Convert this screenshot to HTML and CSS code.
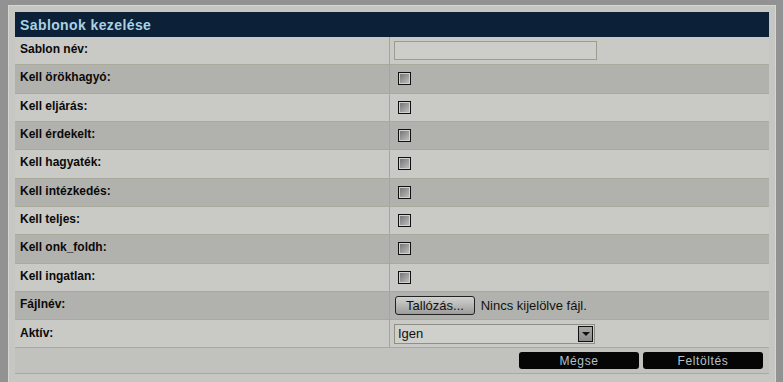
FILE: index.html
```html
<!DOCTYPE html>
<html lang="hu">
<head>
    <meta charset="UTF-8">
    <title>Sablonok kezelése</title>
    <link rel="stylesheet" href="styles.css">
</head>
<body>
    <div class="panel">
        <div class="panel-title">Sablonok kezelése</div>
        <table class="form-table">
            <tr class="light">
                <td class="label">Sablon név:</td>
                <td><input type="text" class="text-input"></td>
            </tr>
            <tr class="dark">
                <td class="label">Kell örökhagyó:</td>
                <td><span class="check"></span></td>
            </tr>
            <tr class="light">
                <td class="label">Kell eljárás:</td>
                <td><span class="check"></span></td>
            </tr>
            <tr class="dark">
                <td class="label">Kell érdekelt:</td>
                <td><span class="check"></span></td>
            </tr>
            <tr class="light">
                <td class="label">Kell hagyaték:</td>
                <td><span class="check"></span></td>
            </tr>
            <tr class="dark">
                <td class="label">Kell intézkedés:</td>
                <td><span class="check"></span></td>
            </tr>
            <tr class="light">
                <td class="label">Kell teljes:</td>
                <td><span class="check"></span></td>
            </tr>
            <tr class="dark">
                <td class="label">Kell onk_foldh:</td>
                <td><span class="check"></span></td>
            </tr>
            <tr class="light">
                <td class="label">Kell ingatlan:</td>
                <td><span class="check"></span></td>
            </tr>
            <tr class="dark">
                <td class="label">Fájlnév:</td>
                <td class="file-cell">
                    <span class="browse-btn">Tallózás...</span>
                    <span class="file-text">Nincs kijelölve fájl.</span>
                </td>
            </tr>
            <tr class="light last">
                <td class="label">Aktív:</td>
                <td>
                    <div class="select">
                        <span class="select-value">Igen</span>
                        <span class="select-arrow"></span>
                    </div>
                </td>
            </tr>
            <tr class="footer-row">
                <td colspan="2">
                    <div class="actions">
                        <button class="action-btn">Mégse</button>
                        <button class="action-btn">Feltöltés</button>
                    </div>
                </td>
            </tr>
        </table>
    </div>
</body>
</html>
```

FILE: styles.css
```css
body {
    margin: 0;
    padding: 5px 7px 0 8px;
    background: #929292;
    font-family: "Liberation Sans", Arial, sans-serif;
    height: 382px;
    box-sizing: border-box;
    overflow: hidden;
}

.panel {
    background: #c6c6c2;
    border: 1px solid #d6d6d2;
    border-bottom: none;
    padding: 6px 6px 0 6px;
    height: 377px;
    box-sizing: border-box;
}

.panel-title {
    background: #0c2038;
    color: #a9d2e2;
    font-weight: bold;
    font-size: 14px;
    letter-spacing: 0.4px;
    height: 25px;
    line-height: 26px;
    padding-left: 5px;
}

.form-table {
    width: 100%;
    border-collapse: collapse;
    border-bottom: 1px solid #a9a99c;
}

.form-table td {
    height: 27.33px;
    padding: 0;
    border-bottom: 1px solid #a9a99c;
    vertical-align: middle;
}

.form-table .label {
    width: 364px;
    padding: 0 5px;
    font-size: 12px;
    font-weight: bold;
    color: #0a0a0a;
    border-right: 1px solid #a6a698;
    vertical-align: top;
    padding-top: 5px;
    height: 22.33px;
}

.last td {
    height: 26px;
}

.last .label {
    height: 21px;
    padding-top: 6px;
}

.light {
    background: #c9c9c5;
}

.dark {
    background: #b1b1ad;
}

.text-input {
    display: block;
    margin-left: 4px;
    width: 203px;
    height: 19px;
    box-sizing: border-box;
    background: #cdcdc9;
    border: 1px solid #9d9d8d;
}

.check {
    display: block;
    margin-left: 8px;
    width: 11px;
    height: 11px;
    border: 1px solid #111;
    background: linear-gradient(135deg, #6e6e6e, #c4c4c4);
    box-shadow: inset 0 0 0 1px #d0d0d0;
}

.file-cell {
    font-size: 13px;
}

.browse-btn {
    display: inline-block;
    margin-left: 5px;
    width: 78px;
    height: 17px;
    line-height: 17px;
    text-align: center;
    border: 1px solid #222;
    border-radius: 3px;
    background: linear-gradient(#d2d2d0, #9c9c9a);
    color: #111;
    font-size: 13px;
}

.file-text {
    margin-left: 2px;
    color: #111;
}

.select {
    display: flex;
    align-items: center;
    justify-content: space-between;
    margin-left: 4px;
    width: 201px;
    height: 20px;
    box-sizing: border-box;
    background: #cfcfcb;
    border: 1px solid #8f8f85;
    font-size: 13px;
    color: #111;
}

.select-value {
    padding-left: 3px;
}

.select-arrow {
    position: relative;
    width: 13px;
    height: 14px;
    margin-right: 1px;
    border: 1px solid #111;
    background: linear-gradient(#a8a8a8, #8c8c8c);
}

.select-arrow::after {
    content: "";
    position: absolute;
    left: 3px;
    top: 5px;
    border-left: 4px solid transparent;
    border-right: 4px solid transparent;
    border-top: 4px solid #111;
}

.footer-row {
    background: #c1c1bd;
}

.footer-row td {
    height: 25px;
}

.actions {
    display: flex;
    justify-content: flex-end;
    gap: 4px;
    padding-right: 6px;
}

.action-btn {
    width: 120px;
    height: 17px;
    padding: 0;
    border: none;
    border-radius: 3px;
    background: #050505;
    color: #b8c0c8;
    font-family: "Liberation Sans", Arial, sans-serif;
    font-size: 12px;
    letter-spacing: 0.6px;
}
```
